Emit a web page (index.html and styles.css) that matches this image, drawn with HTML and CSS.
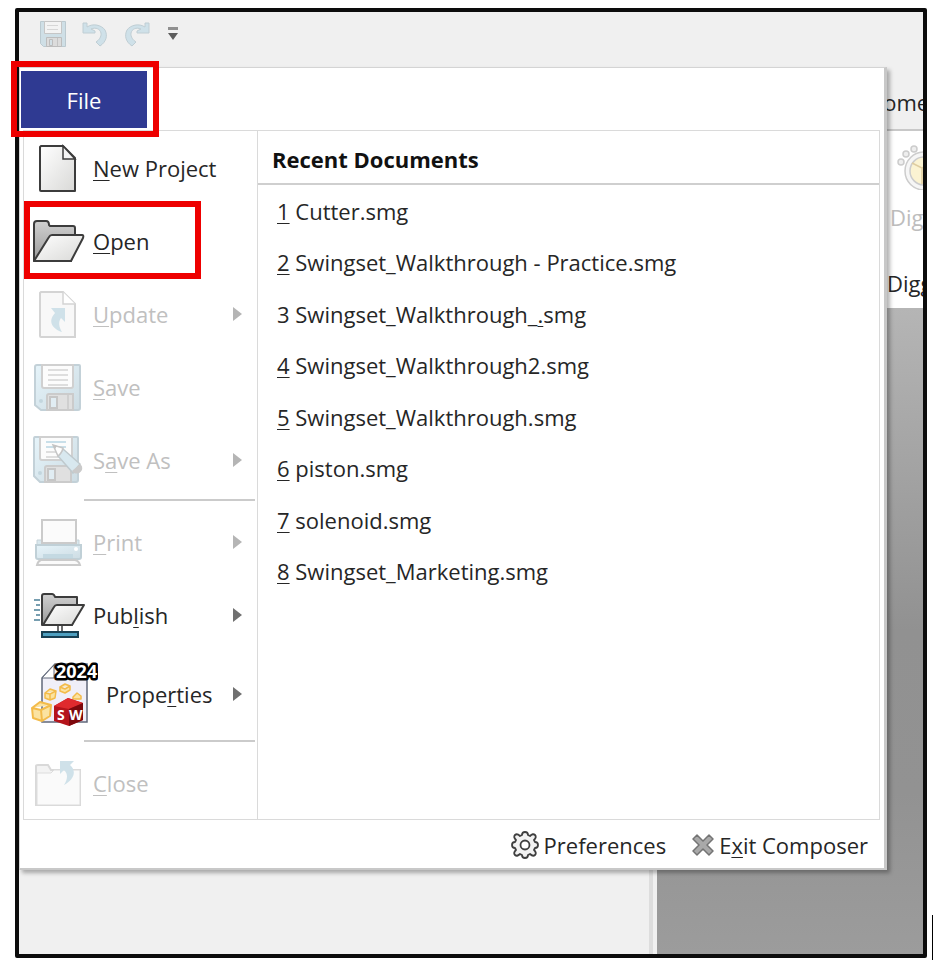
FILE: index.html
```
<!DOCTYPE html>
<html lang="en">
<head>
  <meta charset="UTF-8">
  <meta name="viewport" content="width=device-width, initial-scale=1.0">
  <title>Composer</title>
  <link rel="stylesheet" href="styles.css">
</head>
<body>

  <div class="window">
    <div class="quick-access">
      <button class="quick-btn" aria-label="Save">
        <svg width="28" height="28" viewBox="0 0 28 28">
          <path d="M1.500 1.500h25v25h-22l-3-3z" fill="#cfdfe6" stroke="#bccad0"/>
          <path d="M5.500 1.500h17v12h-17z" fill="#f3f3f3" stroke="#c6c6c6"/>
          <path d="M8 5.500h11M8 9.500h11" stroke="#d6d6d6"/>
          <path d="M7.500 17.500h15v9h-15z" fill="#dcdcdc" stroke="#bdbdbd"/>
          <path d="M10.500 19.500h3v6h-3z" fill="#d3e0e6" stroke="#bdbdbd"/>
          <path d="M18.500 18v8" stroke="#c4c4c4"/>
        </svg>
      </button>
      <button class="quick-btn" aria-label="Undo">
        <svg width="28" height="28" viewBox="0 0 28 28">
          <path d="M2 3v10h12v-2l-4-2c5-2 9 0 10 4 .5 4-2 7-5 9l4 4c6-4 8-10 5-16-3.500-5-12-7-18-3V3z" fill="#cfe1e9" stroke="#c0ced4"/>
        </svg>
      </button>
      <button class="quick-btn" aria-label="Redo">
        <svg width="28" height="28" viewBox="0 0 28 28">
          <path d="M26 3v10h-12v-2l4-2c-5-2-9 0-10 4-.5 4 2 7 5 9l-4 4c-6-4-8-10-5-16 3.500-5 12-7 18-3V3z" fill="#cfe1e9" stroke="#c0ced4"/>
        </svg>
      </button>
      <button class="quick-btn quick-more" aria-label="Customize">
        <svg width="12" height="14" viewBox="0 0 12 14">
          <path d="M1 0h10v3h-10z" fill="#909090"/>
          <path d="M1 6h10l-5 7z" fill="#5c5c5c"/>
        </svg>
      </button>
    </div>

    <div class="tabs"><span>Home</span></div>

    <div class="ribbon">
      <div class="ribbon-group">
        <svg width="64" height="48" viewBox="0 0 64 48">
          <g fill="#eee" stroke="#ccc" stroke-width="1.500">
            <circle cx="14" cy="20" r="3"/>
            <circle cx="19" cy="12" r="3"/>
            <circle cx="27" cy="7" r="3"/>
            <circle cx="37" cy="29" r="19" fill="#f6f6f6"/>
            <circle cx="37" cy="29" r="14" fill="#fbf3d2"/>
          </g>
          <path d="M25 21l10 5v16M35 26l10-6" fill="none" stroke="#dfcda0" stroke-width="1.500"/>
        </svg>
        <span class="ribbon-label">Digger</span>
        <span class="ribbon-title">Digger</span>
      </div>
    </div>

    <div class="workspace">
      <div class="side-panel"></div>
      <div class="splitter"></div>
      <div class="viewport"></div>
    </div>

    <div class="app-menu">
      <div class="menu-top">
        <button class="file-tab marked">File</button>
      </div>

      <div class="menu-body">
        <nav class="commands">
          <button class="command">
            <svg class="icon" width="54" height="54" viewBox="0 0 54 54">
              <defs>
                <linearGradient id="paper" x1="0" y1="0" x2="1" y2="1">
                  <stop offset="0" stop-color="#fff"/><stop offset="1" stop-color="#d9d9d7"/>
                </linearGradient>
                <linearGradient id="back" x1="0" y1="0" x2="0" y2="1">
                  <stop offset="0" stop-color="#d0d0d0"/><stop offset="1" stop-color="#9a9a9a"/>
                </linearGradient>
                <linearGradient id="blue" x1="0" y1="0" x2="1" y2="1">
                  <stop offset="0" stop-color="#e6f4fa"/><stop offset="1" stop-color="#cddce3"/>
                </linearGradient>
              </defs>
              <path d="M10 5h22l12 12v33h-34a1 1 0 0 1-1-1V6z" fill="url(#paper)" stroke="#3c3c3c" stroke-width="2" stroke-linejoin="round"/>
              <path d="M32 5v13h12z" fill="#f4f4f4" stroke="#3c3c3c" stroke-width="1.500"/>
            </svg>
            <span class="label"><u>N</u>ew Project</span>
          </button>
          <button class="command marked">
            <svg class="icon" width="54" height="54" viewBox="0 0 54 54">
              <path d="M3 47V10q0-3 3-3h9q3 0 3 4l1 1h23q2 0 2 2v8L40 47z" fill="url(#back)" stroke="#3c3c3c" stroke-width="2" stroke-linejoin="round"/>
              <path d="M3 47L18 23q1-2 3-2h30q2 0 1 3L40 47z" fill="url(#paper)" stroke="#3c3c3c" stroke-width="2" stroke-linejoin="round"/>
            </svg>
            <span class="label"><u>O</u>pen</span>
          </button>
          <button class="command" disabled>
            <svg class="icon" width="54" height="54" viewBox="0 0 54 54">
              <path d="M10 5h22l12 12v33h-34a1 1 0 0 1-1-1V6z" fill="#f8f8f8" stroke="#d4d4d4" stroke-width="2"/>
              <path d="M32 5v12h12" fill="#fff" stroke="#d4d4d4" stroke-width="1.500"/>
              <path d="M20 21h14v14l-4-4c-3 4-2 9 1 14-9-3-15-10-7-19z" fill="#cfe1e9"/>
            </svg>
            <span class="label"><u>U</u>pdate</span>
            <span class="arrow"></span>
          </button>
          <button class="command" disabled>
            <svg class="icon" width="54" height="54" viewBox="0 0 54 54">
              <path d="M6 5h42q1 0 1 1v42q0 2-2 2H10l-6-5V7q0-2 2-2z" fill="url(#blue)" stroke="#c3d1d8" stroke-width="2"/>
              <path d="M11 5h31v21q0 2-2 2H13q-2 0-2-2z" fill="#fcfcfc" stroke="#d0d0d0" stroke-width="2"/>
              <path d="M17 10h20M17 15h20M17 20h20M17 25h20" stroke="#dedede" stroke-width="2"/>
              <path d="M16 50V36q0-2 2-2h24v16z" fill="#e0e0e0" stroke="#cbcbcb" stroke-width="2"/>
              <path d="M19 37h7v11h-7z" fill="#e1edf3" stroke="#c6c6c6" stroke-width="2"/>
              <path d="M37 35v14" stroke="#cfcfcf" stroke-width="2"/>
              <circle cx="10" cy="41" r="2" fill="#c3d6de"/>
            </svg>
            <span class="label"><u>S</u>ave</span>
          </button>
          <button class="command" disabled>
            <svg class="icon" width="54" height="54" viewBox="0 0 54 54">
              <path d="M4 4h42q1 0 1 1v42q0 2-2 2H9l-6-6V6q0-2 1-2z" fill="url(#blue)" stroke="#c3d1d8" stroke-width="2"/>
              <path d="M9 4h32v21q0 2-2 2H11q-2 0-2-2z" fill="#fcfcfc" stroke="#d0d0d0" stroke-width="2"/>
              <path d="M15 9h20M15 14h20" stroke="#c9dfe9" stroke-width="2"/>
              <path d="M15 19h20M15 24h20" stroke="#dedede" stroke-width="2"/>
              <path d="M14 49V35q0-2 2-2h24v16z" fill="#e0e0e0" stroke="#cbcbcb" stroke-width="2"/>
              <path d="M17 36h7v11h-7z" fill="#e1edf3" stroke="#c6c6c6" stroke-width="2"/>
              <circle cx="9" cy="40" r="2" fill="#c3d6de"/>
              <path d="M32 16l17 15-7 9-15-17z" fill="#d8e8ef" stroke="#bfc9cd" stroke-width="1.500"/>
              <path d="M22 12l10 3q-1 5-5 8z" fill="#fff" stroke="#c6c6c6" stroke-width="1.500"/>
              <path d="M22 12l4 1-2 3z" fill="#c2c2c2"/>
              <path d="M49 31q3 2 2 6-3 5-8 3l-2-2z" fill="#cacaca"/>
            </svg>
            <span class="label">S<u>a</u>ve As</span>
            <span class="arrow"></span>
          </button>
          <hr class="divider">
          <button class="command" disabled>
            <svg class="icon" width="54" height="54" viewBox="0 0 54 54">
              <path d="M6 25h42v6H6z" fill="#d9e8ee" stroke="#c5d2d8"/>
              <path d="M11 5h34v23H11z" fill="#fbfbfb" stroke="#cbcbcb" stroke-width="2"/>
              <path d="M5 30h45v12q0 2-2 2H7q-2 0-2-2z" fill="url(#blue)" stroke="#c0d0d7" stroke-width="2"/>
              <path d="M12 39h30v4H12z" fill="#c4d9e2"/>
              <circle cx="45" cy="34" r="2" fill="#fff"/>
              <path d="M10 45h34q4 1 5 5H6q1-4 4-5z" fill="#fafafa" stroke="#cbcbcb" stroke-width="2"/>
            </svg>
            <span class="label"><u>P</u>rint</span>
            <span class="arrow"></span>
          </button>
          <button class="command">
            <svg class="icon" width="54" height="54" viewBox="0 0 54 54">
              <path d="M3 12h6M5 17h4M3 22h6M5 27h4M3 32h6" stroke="#4b7f97" stroke-width="1.500"/>
              <path d="M11 37V8q0-2 2-2h8q2 0 3 3h22v9l-5 19z" fill="url(#back)" stroke="#3c3c3c" stroke-width="2" stroke-linejoin="round"/>
              <path d="M12 37l11-18q1-2 3-2h27L41 37z" fill="url(#paper)" stroke="#3c3c3c" stroke-width="2" stroke-linejoin="round"/>
              <path d="M27 38v6M31 38v6" stroke="#3c3c3c" stroke-width="1.500"/>
              <path d="M11 44h36v5H11z" fill="#4d9fc0" stroke="#173f52" stroke-width="2"/>
            </svg>
            <span class="label">Pub<u>l</u>ish</span>
            <span class="arrow"></span>
          </button>
          <button class="command command-tall">
            <svg class="icon" width="67" height="68" viewBox="0 0 67 68">
              <path d="M11 62V18L24 4h32v58z" fill="#f0eff8" stroke="#60687a" stroke-width="1.500"/>
              <path d="M11 18h12V5z" fill="#fff" stroke="#60687a"/>
              <g fill="#fbe3a1" stroke="#f3bb4a" stroke-width="1.500" stroke-linejoin="round">
                <path d="M14 33l5-4 6 2-1 7-5 2-5-2zM14 33l5 1 6-3M19 34v6"/>
                <path d="M29 27l5-3 5 2v4l-5 3-5-2zM29 27l5 2 5-3"/>
                <path d="M42 37l4-4 4 3v3h-8z"/>
                <path d="M1 48l8-6 11 3-1 11-8 5-9-3zM1 48l9 2 10-5M10 50l1 11" stroke-width="2"/>
              </g>
              <path d="M23 46l14-8 15 5v17l-14 6-15-5z" fill="#b5141b"/>
              <path d="M23 46l14-8 15 5-14 6z" fill="#e02a2e"/>
              <path d="M38 49l14-6v17l-14 6z" fill="#7d080d"/>
              <text class="cube-text" x="26" y="60">S</text>
              <text class="cube-text" x="38" y="60">W</text>
              <text class="year-text" x="25" y="18">2024</text>
            </svg>
            <span class="label">Prope<u>r</u>ties</span>
            <span class="arrow"></span>
          </button>
          <hr class="divider">
          <button class="command" disabled>
            <svg class="icon" width="54" height="54" viewBox="0 0 54 54">
              <path d="M5 49V10q0-1 2-1h10l3 5h29v35z" fill="#f3f3f3" stroke="#d9d9d9" stroke-width="2"/>
              <path d="M6 17h14l3-3h26v35H6z" fill="#fafafa" stroke="#dcdcdc"/>
              <path d="M29 5h14l-4 4c7 6 4 15-6 20 4-7 4-11 0-15l-4 4z" fill="#cfe1e9"/>
            </svg>
            <span class="label"><u>C</u>lose</span>
          </button>
        </nav>

        <section class="recent">
          <h2>Recent Documents</h2>
          <div class="recent-list">
            <a href="#"><u>1</u> Cutter.smg</a>
            <a href="#"><u>2</u> Swingset_Walkthrough - Practice.smg</a>
            <a href="#">3 Swingset_Walkthrough_<u>.</u>smg</a>
            <a href="#"><u>4</u> Swingset_Walkthrough2.smg</a>
            <a href="#"><u>5</u> Swingset_Walkthrough.smg</a>
            <a href="#"><u>6</u> piston.smg</a>
            <a href="#"><u>7</u> solenoid.smg</a>
            <a href="#"><u>8</u> Swingset_Marketing.smg</a>
          </div>
        </section>
      </div>

      <div class="menu-footer">
        <button class="footer-btn">
          <svg width="28" height="28" viewBox="0 0 28 28">
            <path d="M11 4q0-3 3-3t3 3l2 1q3-3 5-1t-1 5l1 2q3 0 3 3t-3 3l-1 2q3 3 1 5t-5-1l-2 1q0 3-3 3t-3-3l-2-1q-3 3-5 1t1-5l-1-2q-3 0-3-3t3-3l1-2q-3-3-1-5t5 1z" fill="#f2f2f2" stroke="#3f3f3f" stroke-width="1.800" stroke-linejoin="round"/>
            <circle cx="14" cy="14" r="4.500" fill="#fff" stroke="#3f3f3f" stroke-width="1.800"/>
          </svg>
          <span>Preferences</span>
        </button>
        <button class="footer-btn">
          <svg width="22" height="22" viewBox="0 0 22 22">
            <path d="M5 1l6 6 6-6 4 4-6 6 6 6-4 4-6-6-6 6-4-4 6-6-6-6z" fill="#a9a9a9" stroke="#747474" stroke-width="1.500" stroke-linejoin="round"/>
          </svg>
          <span>E<u>x</u>it Composer</span>
        </button>
      </div>
    </div>
  </div>

  <span class="caret"></span>

</body>
</html>
```

FILE: styles.css
```
* {
  margin: 0;
  padding: 0;
  box-sizing: border-box;
}

body {
  position: relative;
  height: 100vh;
  padding: 8px 10px 8px 15px;
  background-color: #fff;
  color: #262626;
  font-family: "Open Sans", "Noto Sans", sans-serif;
  font-size: 22px;
  line-height: 30px;
}

button {
  border: none;
  background: none;
  color: inherit;
  font: inherit;
  text-align: left;
}

svg {
  display: block;
  flex-shrink: 0;
}

u {
  text-decoration-thickness: 1px;
  text-underline-offset: 3px;
  text-decoration-skip-ink: none;
}

/* Application window */
.window {
  position: relative;
  display: flex;
  flex-direction: column;
  height: 100%;
  border: 4px solid #0c0c0c;
  border-radius: 2px;
  background-color: #f0f0f0;
}

.quick-access {
  display: flex;
  align-items: center;
  gap: 14px;
  height: 55px;
  padding: 0 20px 12px;
}

.quick-more {
  margin-left: 2px;
}

.tabs {
  height: 64px;
  padding: 20px 0 0 848px;
  border-bottom: 2px solid #c8c8c8;
  overflow: hidden;
  white-space: nowrap;
}

.ribbon {
  height: 177px;
  padding: 11px 0 0 868px;
  background-color: #fff;
  overflow: hidden;
}

.ribbon-group {
  display: flex;
  flex-direction: column;
}

.ribbon-label {
  margin-top: 12px;
  padding-left: 3px;
  color: #bdbdbd;
}

.ribbon-title {
  margin-top: 36px;
}

.workspace {
  display: flex;
  flex: 1;
}

.side-panel {
  width: 630px;
}

.splitter {
  width: 8px;
  border-left: 4px solid #ddd;
}

.viewport {
  flex: 1;
  background: linear-gradient(#b5b5b5, #919191 50%, #929292 75%, #9c9c9c);
}

/* File menu */
.app-menu {
  position: absolute;
  top: 55px;
  left: 0;
  width: 868px;
  border: 1px solid #d4d4d4;
  border-right: 3px solid #c8c8c8;
  border-bottom: 2px solid #c8c8c8;
  background-color: #fff;
  box-shadow: 3px 3px 4px rgba(0, 0, 0, 0.3);
}

.menu-top {
  padding: 3px 0 2px 1px;
}

.file-tab {
  display: block;
  width: 126px;
  height: 57px;
  background-color: #2f3a92;
  color: #fff;
  text-align: center;
}

/* Red callout drawn round a control */
.marked {
  position: relative;
}

.marked::after {
  content: "";
  position: absolute;
  border: 6px solid #ee0000;
}

.file-tab::after {
  inset: -10px -12px -9px -10px;
}

.command.marked::after {
  inset: -3px 56px -2px 0;
}

.menu-body {
  display: flex;
  margin: 0 4px 0 3px;
  border: 1px solid #dadada;
}

.commands {
  width: 234px;
  border-right: 1px solid #dadada;
}

.command {
  display: flex;
  align-items: center;
  width: 100%;
  height: 73px;
  padding: 0 15px 0 7px;
}

.command:disabled {
  color: #c0c0c0;
}

.command .label {
  margin-left: 8px;
}

.command-tall {
  height: 86px;
}

.arrow {
  margin-left: auto;
  border: 7px solid transparent;
  border-right: none;
  border-left: 9px solid #707070;
}

.command:disabled .arrow {
  border-left-color: #b5b5b5;
}

.divider {
  height: 9px;
  margin: 0 2px 0 60px;
  border: solid transparent;
  border-width: 3px 0 4px;
  background-color: #cbcbcb;
  background-clip: padding-box;
}

.year-text {
  fill: #fff;
  stroke: #000;
  stroke-width: 5px;
  stroke-linejoin: round;
  paint-order: stroke;
  font-size: 18px;
  font-weight: 700;
}

.cube-text {
  fill: #fff;
  font-size: 14px;
  font-weight: 700;
}

.recent {
  flex: 1;
}

.recent h2 {
  height: 54px;
  padding: 13px 14px 0;
  border-bottom: 2px solid #cfcfcf;
  color: #111;
  font-size: 22px;
  line-height: 30px;
}

.recent-list {
  display: grid;
  grid-auto-rows: 1fr;
  align-items: center;
  height: 412px;
  padding-left: 19px;
}

.recent-list a {
  color: inherit;
  text-decoration: none;
}

.menu-footer {
  display: flex;
  justify-content: flex-end;
  gap: 26px;
  padding: 10px 16px 8px 0;
}

.footer-btn {
  display: flex;
  align-items: center;
  gap: 5px;
}

.caret {
  position: absolute;
  right: 4px;
  bottom: 6px;
  width: 1px;
  height: 45px;
  background-color: #000;
}
```
